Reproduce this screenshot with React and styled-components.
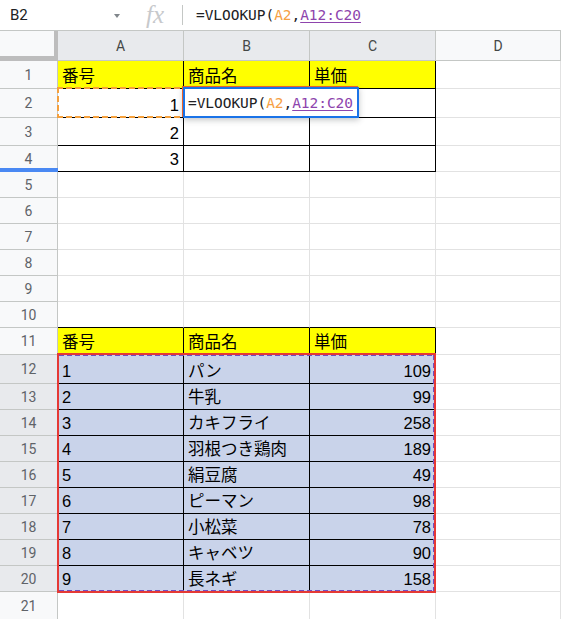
import styled, { createGlobalStyle } from 'styled-components';

const GlobalStyle = createGlobalStyle`
    html, body {
        margin: 0;
        padding: 0;
        background: #fff;
        overflow: hidden;
    }
    * {
        box-sizing: border-box;
    }
`;

const COLS = '58px 126px 126px 126px 1fr';
const CELL_FONT = `"Liberation Sans", Arial, "Noto Sans CJK JP", sans-serif`;
const MONO = `"DejaVu Sans Mono", "Liberation Mono", monospace`;

const rowHeights = [28, 29, 28, 26, 26, 26, 26, 26, 26, 26, 27, 29, 26, 26, 26, 26, 26, 26, 26, 26, 28];

const products = [
    ['パン', 109],
    ['牛乳', 99],
    ['カキフライ', 258],
    ['羽根つき鶏肉', 189],
    ['絹豆腐', 49],
    ['ピーマン', 98],
    ['小松菜', 78],
    ['キャベツ', 90],
    ['長ネギ', 158],
];

const header = ['番号', '商品名', '単価'];

// returns [A, B, C] cell definitions for a given row number
const cellsFor = (row) => {
    if (row === 1 || row === 11) {
        return header.map((t) => ({ text: t, bg: '#ffff00', black: true }));
    }
    if (row >= 2 && row <= 4) {
        return [{ text: row - 1, align: 'right', black: true }, { black: true }, { black: true }];
    }
    if (row >= 12 && row <= 20) {
        const [name, price] = products[row - 12];
        return [
            { text: row - 11, bg: '#c9d3ea', black: true },
            { text: name, bg: '#c9d3ea', black: true },
            { text: price, bg: '#c9d3ea', black: true, align: 'right' },
        ];
    }
    if (row === 10) {
        return [{ blackBottom: true }, { blackBottom: true }, { blackBottom: true }];
    }
    return [{}, {}, {}];
};

const Formula = () => (
    <>
        =VLOOKUP(<RefA2>A2</RefA2>,<RefRange>A12:C20</RefRange>
    </>
);

const App = () => {
    return (
        <>
            <GlobalStyle />
            <Sheet>
                <FormulaBar>
                    <NameBox>
                        B2
                        <Caret />
                    </NameBox>
                    <FxLabel>fx</FxLabel>
                    <Divider />
                    <FormulaText>
                        <Formula />
                    </FormulaText>
                </FormulaBar>

                <HeaderRow>
                    <Corner />
                    {['A', 'B', 'C', 'D'].map((c) => (
                        <ColHead key={c} $sel={c !== 'D'}>
                            {c}
                        </ColHead>
                    ))}
                </HeaderRow>

                {rowHeights.map((h, i) => {
                    const row = i + 1;
                    const cells = cellsFor(row);
                    return (
                        <Row key={row} $h={h}>
                            <RowHead $sel={row >= 12 && row <= 20}>
                                {row}
                                {row === 4 && <DragBar />}
                            </RowHead>
                            {cells.map((c, ci) => (
                                <Cell
                                    key={ci}
                                    $bg={c.bg}
                                    $black={c.black}
                                    $blackBottom={c.blackBottom}
                                    $align={c.align}
                                >
                                    {c.text}
                                    {row === 2 && ci === 0 && <RefBox />}
                                    {row === 2 && ci === 1 && (
                                        <Editor>
                                            <Formula />
                                        </Editor>
                                    )}
                                    {row === 12 && ci === 0 && <RangeBox />}
                                </Cell>
                            ))}
                            <Cell />
                        </Row>
                    );
                })}
            </Sheet>
        </>
    );
};

export default App;

const Sheet = styled.div`
    width: 561px;
    height: 619px;
    overflow: hidden;
    font-family: ${CELL_FONT};
`;

const FormulaBar = styled.div`
    height: 31px;
    display: flex;
    align-items: center;
    border-bottom: 1px solid #c4c7c5;
    background: #fff;
`;

const NameBox = styled.div`
    width: 128px;
    height: 100%;
    display: flex;
    align-items: center;
    justify-content: space-between;
    padding: 0 8px 0 10px;
    font-family: Roboto, "Liberation Sans", sans-serif;
    font-size: 15px;
    color: #202124;
`;

const Caret = styled.span`
    width: 0;
    height: 0;
    border-left: 3.5px solid transparent;
    border-right: 3.5px solid transparent;
    border-top: 4px solid #80868b;
    margin-top: 2px;
`;

const FxLabel = styled.div`
    width: 54px;
    text-align: center;
    font-family: "Liberation Serif", serif;
    font-style: italic;
    font-size: 25px;
    color: #c7c9cc;
    line-height: 1;
    padding-bottom: 2px;
`;

const Divider = styled.div`
    width: 1px;
    height: 20px;
    background: #c4c7c5;
`;

const FormulaText = styled.div`
    padding-left: 13px;
    font-family: ${MONO};
    font-size: 14.5px;
    color: #202124;
    letter-spacing: -0.05px;
`;

const RefA2 = styled.span`
    color: #f6a043;
`;

const RefRange = styled.span`
    color: #8e44ad;
    text-decoration: underline;
    text-underline-offset: 2px;
`;

const HeaderRow = styled.div`
    display: grid;
    grid-template-columns: ${COLS};
    height: 30px;
`;

const Corner = styled.div`
    background: #f8f9fa;
    border-right: 4px solid #bdbdbd;
    border-bottom: 5px solid #bdbdbd;
`;

const ColHead = styled.div`
    display: flex;
    align-items: center;
    justify-content: center;
    background: ${(p) => (p.$sel ? '#e8eaed' : '#f8f9fa')};
    border-right: 1px solid #c4c7c5;
    border-bottom: 1px solid #c4c7c5;
    font-family: Roboto, "Liberation Sans", sans-serif;
    font-size: 14px;
    color: #444746;
`;

const Row = styled.div`
    display: grid;
    grid-template-columns: ${COLS};
    height: ${(p) => p.$h}px;
`;

const RowHead = styled.div`
    position: relative;
    display: flex;
    align-items: center;
    justify-content: center;
    background: ${(p) => (p.$sel ? '#e8eaed' : '#f8f9fa')};
    border-right: 1px solid #c4c7c5;
    border-bottom: 1px solid #c4c7c5;
    font-family: Roboto, "Liberation Sans", sans-serif;
    font-size: 14px;
    color: #5f6368;
`;

const DragBar = styled.span`
    position: absolute;
    left: 0;
    right: -1px;
    bottom: -1px;
    height: 4px;
    background: #4a89f3;
`;

const Cell = styled.div`
    position: relative;
    display: flex;
    align-items: flex-end;
    justify-content: ${(p) => (p.$align === 'right' ? 'flex-end' : 'flex-start')};
    padding: 0 4px 2px 4px;
    background: ${(p) => p.$bg || '#fff'};
    border-right: 1px solid ${(p) => (p.$black ? '#000' : '#e2e2e2')};
    border-bottom: 1px solid ${(p) => (p.$black || p.$blackBottom ? '#000' : '#e2e2e2')};
    font-size: 16.5px;
    line-height: 20px;
    color: #000;
    white-space: nowrap;
`;

// dashed reference outline, drawn with gradients for longer dashes
const RefBox = styled.span`
    --dash: #f5a03c;
    position: absolute;
    left: -1px;
    top: -2px;
    right: -1px;
    bottom: -1px;
    pointer-events: none;
    background:
        repeating-linear-gradient(90deg, var(--dash) 0 6px, transparent 6px 9px) top left / 100% 2px no-repeat,
        repeating-linear-gradient(90deg, var(--dash) 0 6px, transparent 6px 9px) bottom left / 100% 2px no-repeat,
        repeating-linear-gradient(180deg, var(--dash) 0 6px, transparent 6px 9px) top left / 2px 100% no-repeat;
`;

const Editor = styled.div`
    position: absolute;
    left: -1px;
    top: -2px;
    width: 176px;
    height: 31px;
    display: flex;
    align-items: center;
    padding-left: 3px;
    background: #fff;
    border: 2px solid #1a73e8;
    box-shadow: -1px -1px 0 #e8622c, 0 2px 6px rgba(60, 64, 67, 0.3);
    font-family: ${MONO};
    font-size: 14.5px;
    letter-spacing: -0.05px;
    color: #202124;
    z-index: 2;
`;

const RangeBox = styled.span`
    --dash: #6f4fc2;
    position: absolute;
    left: -1px;
    top: -2px;
    width: 379px;
    height: 240px;
    border: 2px solid #e53935;
    pointer-events: none;
    z-index: 1;

    &::after {
        content: '';
        position: absolute;
        inset: 0;
        background:
            repeating-linear-gradient(90deg, var(--dash) 0 5px, transparent 5px 8px) top left / 100% 1px no-repeat,
            repeating-linear-gradient(90deg, var(--dash) 0 5px, transparent 5px 8px) bottom left / 100% 1px no-repeat,
            repeating-linear-gradient(180deg, var(--dash) 0 5px, transparent 5px 8px) top right / 1px 100% no-repeat;
    }
`;
